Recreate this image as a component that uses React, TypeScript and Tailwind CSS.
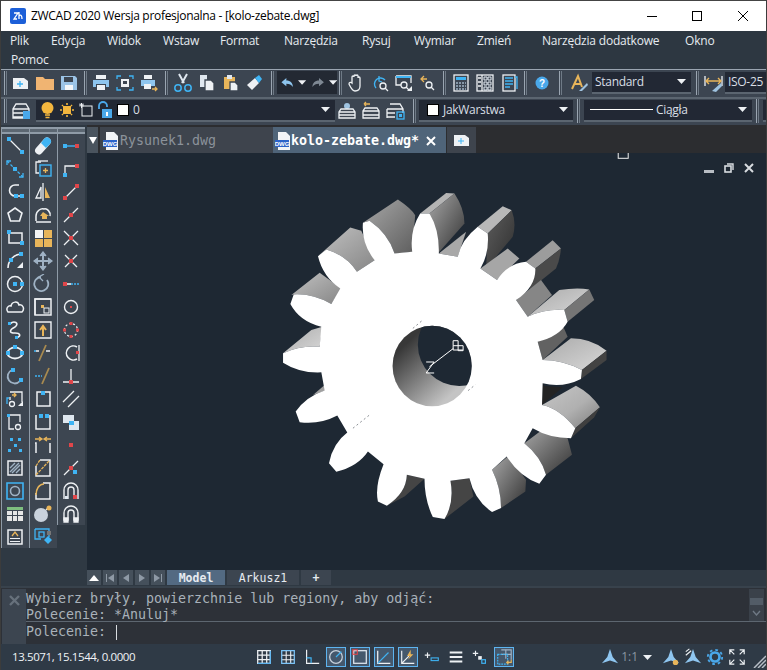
import type { ReactNode } from "react"

const W = "#eef1f4"
const B = "#3fb4f4"
const R = "#e0464a"
const Y = "#e8b55a"
const G = "#9fb2c4"

const Sq = ({ x, y, c = B, s = 4 }: { x: number; y: number; c?: string; s?: number }) => (
  <rect x={x} y={y} width={s} height={s} fill={c} stroke="none" />
)

const Ic = ({ children, size = 20 }: { children: ReactNode; size?: number }) => (
  <svg width={size} height={size} viewBox="0 0 20 20" fill="none" stroke={W} strokeWidth="1.3">
    {children}
  </svg>
)

// left toolbars, top to bottom
const drawIcons: ReactNode[] = [
  <><path d="M4 3 L16 15" /><Sq x={2} y={1} /><Sq x={15} y={14} /></>,
  <><path d="M2 2 L18 18" stroke={B} strokeDasharray="3 2" /><Sq x={8} y={8} /><path d="M2 6 V2 H6 M18 14 V18 H14" stroke={B} /></>,
  <><path d="M14 3 H10 A5 5 0 0 0 10 14 H16" strokeWidth="1.6" /><Sq x={9} y={12} /><Sq x={15} y={12} /></>,
  <path d="M10 3 L17 8 L14.5 16 H5.5 L3 8 Z" strokeWidth="1.6" />,
  <><path d="M4 5 H17 V15 H4 Z" strokeWidth="1.5" /><Sq x={2} y={2} /><Sq x={15} y={13} /></>,
  <><path d="M3 17 A14 14 0 0 1 16 3" strokeWidth="1.6" /><Sq x={14} y={1} /><Sq x={4} y={7} /><path d="M12 17 L18 11 V17 Z" fill={W} stroke="none" /></>,
  <><circle cx="10" cy="10" r="7.5" strokeWidth="1.5" /><Sq x={8} y={8} /><Sq x={15} y={8} /></>,
  <path d="M3 15 C0 11 4 8 6 9 C7 4 13 4 14 8 C18 7 20 12 17 15 Z" strokeWidth="1.5" />,
  <><path d="M5 4 C9 0 15 3 10 7 C4 10 4 13 10 13 C15 13 17 16 11 18" strokeWidth="1.6" /><Sq x={3} y={2} s={3} /><Sq x={10} y={16} s={3} /></>,
  <><ellipse cx="10" cy="10" rx="7.5" ry="5.5" strokeWidth="1.8" /><Sq x={8} y={2} /><Sq x={1} y={8} /><Sq x={15} y={8} /></>,
  <><path d="M15 15 A7 7 0 1 1 7 4" stroke={G} strokeWidth="1.8" /><Sq x={6} y={2} s={4} /><Sq x={14} y={12} /></>,
  <><path d="M5 3 H17 V13 M5 11 V8" /><path d="M4 9 H2 V15" stroke={B} /><circle cx="7" cy="15" r="2.5" /><path d="M7 6 H11 M9 4 L11 6 L9 8" stroke={Y} /><path d="M13 17 L18 12 V17 Z" fill={W} stroke="none" /></>,
  <><path d="M4 3 H15 V10 M4 3 V17 H9" /><circle cx="13" cy="15" r="2.5" /><Sq x={2} y={2} s={3} /></>,
  <><Sq x={5} y={3} s={3} /><Sq x={13} y={3} s={3} /><Sq x={9} y={9} s={3} /><Sq x={3} y={14} s={3} /><Sq x={14} y={14} s={3} /></>,
  <><path d="M3 3 H17 V17 H3 Z" strokeWidth="1.5" /><path d="M5 10 L10 5 M5 14 L14 5 M7 15 L15 7 M11 15 L15 11" stroke={G} strokeWidth="1.4" /></>,
  <><path d="M2 2 H18 V18 H2 Z" stroke={B} strokeWidth="1.6" /><circle cx="10" cy="10" r="4.5" stroke={G} strokeWidth="1.6" /></>,
  <><rect x="2" y="3" width="16" height="3" fill="#7fbf7f" stroke="none" /><path d="M2 7 H7 V11 H2 Z M8 7 H12 V11 H8 Z M13 7 H18 V11 H13 Z M2 12 H7 V17 H2 Z M8 12 H12 V17 H8 Z M13 12 H18 V17 H13 Z" fill="#e6e6e6" stroke="none" /></>,
  <><path d="M3 3 H17 V17 H3 Z" strokeWidth="1.5" /><path d="M7 9 L10 5 L13 9" stroke={Y} /><path d="M5 11.5 H15 M5 14.5 H15" strokeWidth="1" /></>,
]

const editIcons: ReactNode[] = [
  <><path d="M3 12 L11 3 A3 3 0 0 1 17 8 L9 17 A3 3 0 0 1 3 12 Z" fill={W} stroke="none" /><path d="M8 7 L11 3 A3 3 0 0 1 17 8 L13 12 Z" fill={B} stroke="none" /></>,
  <><path d="M8 3 H3 V14 H6" /><path d="M5 2 H15" /><rect x="7" y="6" width="11" height="11" stroke={B} strokeWidth="1.4" /><path d="M12.5 9 V14 M10 11.5 H15" stroke={Y} /></>,
  <><path d="M3 16 L8 5 V16 Z" /><path d="M10 1 V19" /><path d="M12 5 L17 16 H12 Z" fill={Y} stroke="none" /></>,
  <><path d="M3 16 V11 C3 6 8 3 11 4 C14 3 18 7 17 11 M3 17 H18" strokeWidth="1.5" /><path d="M10 7 L7 11 H9 V14 H14 V11 H16 Z" fill={Y} stroke="none" /></>,
  <><Sq x={2} y={2} s={8} c="#f4f4f4" /><Sq x={11} y={2} s={8} c={Y} /><Sq x={2} y={11} s={8} c={Y} /><Sq x={11} y={11} s={8} c={Y} /></>,
  <><path d="M10 2 V18 M2 10 H18" stroke={G} strokeWidth="2" /><path d="M7 5 L10 1 L13 5 M7 15 L10 19 L13 15 M5 7 L1 10 L5 13 M15 7 L19 10 L15 13" fill={G} stroke={G} /></>,
  <><path d="M14 6 A7 7 0 1 1 8 3" stroke={G} strokeWidth="1.8" /><path d="M11 0 L6 3 L10 7" stroke={G} strokeWidth="1.3" /></>,
  <><path d="M2 2 H18 V18 H2 Z" strokeWidth="1.5" /><path d="M2 18 V2 H18" /><Sq x={8} y={8} s={3} c={Y} /><rect x="11" y="11" width="5" height="5" strokeWidth="1" /></>,
  <><path d="M2 2 H18 V18 H2 Z" strokeWidth="1.4" /><path d="M10 16 V7 M7 10 L10 6 L13 10" stroke={Y} strokeWidth="2" /></>,
  <><path d="M3 8 L6 8 M13 8 H17" stroke={W} /><path d="M6 18 L13 2" stroke="#a88a50" strokeWidth="1.8" /><path d="M1 8 H3" stroke={B} /></>,
  <><path d="M2 10 H9" stroke={B} strokeDasharray="2 1" /><path d="M9 18 L16 2" stroke="#a88a50" strokeWidth="1.8" /></>,
  <><path d="M4 3 H17 V17 H4 Z" strokeWidth="1.5" /><Sq x={8} y={2} /></>,
  <><path d="M3 3 V17 H17 V3" strokeWidth="1.5" /><Sq x={6} y={2} /><Sq x={12} y={2} /></>,
  <><path d="M3 18 V8 H2 M17 18 V8" strokeWidth="1.5" /><path d="M2 4 H8 M6 2 L9 4 L6 6 M18 4 H12 M14 2 L11 4 L14 6" stroke={Y} /></>,
  <><path d="M3 8 V18 H17 V2 H7" strokeWidth="1.5" /><path d="M3 8 L7 2 M3 17 L16 3" stroke={Y} strokeDasharray="3 1" /></>,
  <><path d="M3 12 V18 H17 V2 H10" strokeWidth="1.5" /><path d="M3 14 C3 8 6 3 11 3" stroke={Y} strokeWidth="1.5" /></>,
  <><circle cx="8" cy="11" r="7" fill="#c9d2dc" stroke="none" /><path d="M13 6 L15 4" stroke={W} /><circle cx="16" cy="4" r="2.5" fill={Y} stroke="none" /></>,
  <><path d="M2 2 H16 V10 M2 2 V12 H8" stroke={B} /><rect x="6" y="5" width="5" height="5" stroke={B} /><path d="M11 13 L15 9 L19 13 L15 17 Z" fill={B} stroke="none" /><rect x="14" y="4" width="4" height="4" fill="#777" stroke="none" /></>,
]

const snapIcons: ReactNode[] = [
  <><path d="M3 10 H17" stroke={B} strokeWidth="1.4" /><Sq x={2} y={8} /><Sq x={14} y={8} c={R} /></>,
  <><path d="M4 16 V7 H14" /><Sq x={2} y={14} /><Sq x={14} y={5} c={R} /></>,
  <><path d="M4 16 L16 4" /><Sq x={2} y={14} c={R} /><Sq x={14} y={2} c={R} /></>,
  <><path d="M3 17 L17 3" /><Sq x={8} y={8} c={R} /></>,
  <><path d="M3 3 L17 17 M17 3 L3 17" /><Sq x={8} y={8} c={R} /></>,
  <><path d="M4 4 L16 16 M16 4 L4 16" /><Sq x={8} y={8} c={R} /></>,
  <><path d="M3 10 H10" strokeWidth="1.6" /><path d="M10 10 H19" stroke={B} strokeDasharray="2 1" /><Sq x={2} y={8} c={R} /></>,
  <><circle cx="10" cy="10" r="6.5" strokeWidth="1.4" /><Sq x={9} y={9} s={2} c={R} /></>,
  <><circle cx="10" cy="10" r="6.5" stroke={W} strokeWidth="1.2" strokeDasharray="2 2" /><Sq x={8.5} y={2} s={3} c={R} /><Sq x={8.5} y={15} s={3} c={R} /><Sq x={2} y={8.5} s={3} c={R} /><Sq x={15} y={8.5} s={3} c={R} /></>,
  <><path d="M16 4 A7 7 0 1 0 16 16" strokeWidth="1.6" /><path d="M18 2 V18" strokeWidth="1.3" /><Sq x={15} y={8} s={3} c={R} /></>,
  <><path d="M10 3 V16 M2 16 H18" /><Sq x={8} y={14} c={R} /></>,
  <path d="M2 13 L13 2 M7 18 L18 7" />,
  <><path d="M2 3 H13 V9 H18 V18 H8 V11 H2 Z" fill="#dfe7ef" stroke="none" /><path d="M8 9 H13 V13 H8 Z" fill={B} stroke="none" /></>,
  <Sq x={8} y={8} c={R} />,
  <><path d="M3 17 L17 3" /><Sq x={8} y={8} c={R} /><Sq x={12} y={12} /></>,
  <><path d="M3 18 V9 A7 7 0 0 1 17 9 V18 M7 18 V9 A3 3 0 0 1 13 9 V18" strokeWidth="1.4" /><Sq x={4} y={15} s={3} c="#dfe7ef" /><Sq x={12} y={14} c={R} /></>,
  <><path d="M3 16 V9 A7 7 0 0 1 17 9 V16 H13 V9 A3 3 0 0 0 7 9 V16 Z" strokeWidth="1.4" /><path d="M3 14 V18 H7 V14 Z M13 14 V18 H17 V14 Z" fill={W} /></>,
]

const rowOne = {
  file: [
    <><path d="M2 5 H13 L17 8 V16 H2 Z" fill={W} stroke="none" /><path d="M9 8 V14 M6 11 H12" stroke={B} /></>,
    <><path d="M1 4 H8 L10 6 H19 V17 H1 Z" fill="#f0b472" stroke="none" /></>,
    <><path d="M2 3 H16 L18 5 V17 H2 Z" fill="#9bc3e6" stroke="none" /><rect x="5" y="4" width="9" height="5" fill="#3c4551" stroke="none" /><rect x="6" y="12" width="8" height="5" fill="#f4f6f8" stroke="none" /></>,
  ],
  print: [
    <><path d="M5 2 H15 V6 H5 Z" fill={W} stroke="none" /><path d="M2 7 H18 V14 H15 V11 H5 V14 H2 Z" fill="#8ec5ee" stroke="none" /><rect x="6" y="12" width="8" height="5" fill={W} stroke="none" /></>,
    <><path d="M2 6 V3 H6 M14 3 H18 V6 M18 14 V17 H14 M6 17 H2 V14" stroke={B} /><rect x="6" y="6" width="8" height="8" fill={W} stroke="none" /><rect x="8" y="8" width="4" height="3" fill="#3c4551" stroke="none" /></>,
    <><path d="M5 2 H13 V6 H5 Z" fill={W} stroke="none" /><path d="M2 7 H16 V13 H2 Z" fill="#8ec5ee" stroke="none" /><rect x="5" y="11" width="7" height="5" fill={W} stroke="none" /><path d="M13 16 H18 M16 14 L18 16 L16 18" stroke={Y} /></>,
  ],
  edit: [
    <><path d="M6 1 L11 10 M14 1 L9 10" strokeWidth="2" stroke="#dfe7ef" /><circle cx="5" cy="15" r="3.2" stroke={B} strokeWidth="1.5" /><circle cx="15" cy="15" r="3.2" stroke={B} strokeWidth="1.5" /></>,
    <><path d="M3 2 H10 V14 H3 Z" fill="#dfe7ef" stroke="none" /><path d="M8 7 H14 L17 10 V18 H8 Z" fill={W} stroke="#3c4551" /></>,
    <><path d="M3 4 H14 V16 H3 Z" fill={Y} stroke="none" /><rect x="6" y="2" width="5" height="4" fill="#dfe7ef" stroke="none" /><path d="M9 9 H14 L17 12 V18 H9 Z" fill={W} stroke="#3c4551" /></>,
    <><path d="M2 12 L10 5 L14 10 L7 17 Z" fill={W} stroke="none" /><path d="M10 5 L14 2 L17 6 L14 10 Z" fill={B} stroke="none" /></>,
  ],
  view: [
    <path d="M6 10 V4 A1 1 0 0 1 8 4 V3 A1 1 0 0 1 10 3 V3 A1 1 0 0 1 12 3 V5 A1 1 0 0 1 14 5 V13 C14 16 12 18 9 18 C6 18 5 15 3 11 C3 9 5 9 6 10 Z" />,
    <><path d="M6 15 A6 6 0 1 1 15 7" stroke={B} strokeWidth="1.4" /><path d="M9 3 V8 L12 9" stroke={B} /><circle cx="13" cy="13" r="3" /><path d="M15 15 L18 18" /></>,
    <><path d="M2 3 H17 V10 M2 3 V12 H7" stroke={W} /><path d="M2 3 H17 V5 H2 Z" fill={B} stroke="none" /><circle cx="10" cy="12" r="3" /><path d="M12 14 L15 17" /><path d="M13 18 L18 13 V18 Z" fill={W} stroke="none" /></>,
    <><path d="M6 3 L3 6 L6 9 M3 6 H9" stroke={Y} /><circle cx="11" cy="12" r="3" /><path d="M13 14 L16 17" /></>,
  ],
  calc: [
    <><rect x="3" y="2" width="14" height="16" /><rect x="5" y="4" width="10" height="3" fill={B} stroke="none" /><path d="M5 10 H15 M5 13 H15 M5 16 H15" stroke={G} strokeDasharray="2 1" /></>,
    <><rect x="2" y="2" width="16" height="16" /><path d="M7 2 V18" /><path d="M3 5 H6 M3 9 H6 M3 13 H6" /><path d="M9 4 H12 V7 H9 Z M13 4 H16 V7 H13 Z M9 9 H12 V12 H9 Z M13 9 H16 V12 H13 Z M9 14 H12 V17 H9 Z M13 14 H16 V17 H13 Z" stroke="#dfe7ef" strokeWidth="1" /></>,
    <><rect x="4" y="2" width="12" height="16" /><path d="M6 5 H14 M6 8 H14 M6 11 H14 M6 14 H11" stroke={B} strokeWidth="1.5" /><path d="M16 4 H18 V16" stroke={B} /></>,
  ],
}

const Bars = ({ className }: { className: string }) => (
  <div className={`flex h-[24px] shrink-0 items-center justify-center gap-[1px] ${className}`}>
    <div className="h-full w-[1px] bg-[#9aa5b1]" />
    <div className="h-full w-[1px] bg-[#6f7a86]" />
  </div>
)

const Tool = ({ children, className = "w-[24px]" }: { children: ReactNode; className?: string }) => (
  <div className={`flex h-[24px] shrink-0 items-center justify-center ${className}`}>{children}</div>
)

const Caret = ({ className = "" }: { className?: string }) => (
  <svg width="9" height="5" viewBox="0 0 9 5" className={className}>
    <path d="M0 0 H9 L4.5 5 Z" fill={W} />
  </svg>
)

const Combo = ({ className, children }: { className: string; children: ReactNode }) => (
  <div className={`flex h-[22px] shrink-0 items-center border-b-2 border-[#5b6570] bg-[#222834] text-[12px] tracking-[-0.3px] text-[#d9dfe5] ${className}`}>
    {children}
  </div>
)

const menu = [
  { label: "Plik", cls: "w-[41px]" },
  { label: "Edycja", cls: "w-[56px]" },
  { label: "Widok", cls: "w-[56px]" },
  { label: "Wstaw", cls: "w-[57px]" },
  { label: "Format", cls: "w-[64px]" },
  { label: "Narzędzia", cls: "w-[78px]" },
  { label: "Rysuj", cls: "w-[52px]" },
  { label: "Wymiar", cls: "w-[63px]" },
  { label: "Zmień", cls: "w-[65px]" },
  { label: "Narzędzia dodatkowe", cls: "w-[143px]" },
  { label: "Okno", cls: "w-[50px]" },
]

const statusLeft: { icon: ReactNode; on?: boolean }[] = [
  { icon: <><path d="M3 3 H17 V17 H3 Z M3 8 H17 M3 13 H17 M8 3 V17 M13 3 V17" strokeWidth="1.4" /><path d="M17 3 V17 H3" stroke="#5db4f0" strokeWidth="1.4" /></> },
  { icon: <><path d="M3 8 H17 M3 13 H17 M8 3 V17 M13 3 V17" strokeWidth="1.2" /><path d="M3 3 H17 V17 H3 Z" stroke="#7cc4f7" strokeWidth="1.4" /></> },
  { icon: <><path d="M4 2 V17 H18" /><path d="M4 11 H9 V17" stroke={B} /></> },
  { on: true, icon: <><circle cx="10" cy="10" r="7" stroke="#c8d2dc" strokeWidth="1.4" /><path d="M10 10 L16 4" stroke={B} /></> },
  { on: true, icon: <><rect x="3" y="3" width="14" height="14" stroke="#dfe7ef" strokeWidth="1.4" /><rect x="2" y="2" width="5" height="5" stroke={R} strokeWidth="1.2" /></> },
  { on: true, icon: <><path d="M3 3 V17 H17" strokeWidth="1.4" /><path d="M3 17 L15 5" stroke={B} /></> },
  { on: true, icon: <><path d="M3 3 V17 H17 M3 17 L11 9" strokeWidth="1.3" /><path d="M13 2 L9 9 H12 L10 13 L16 7 H13 Z" fill={Y} stroke="none" /></> },
  { icon: <><path d="M2 8 H8 M5 5 V11" /><rect x="9" y="11" width="8" height="3" stroke={B} strokeWidth="1.2" /></> },
  { icon: <path d="M3 5 H17 M3 10 H17 M3 15 H17" strokeWidth="2.4" /> },
  { icon: <><path d="M2 6 H8 M5 3 V9" /><rect x="8" y="9" width="4" height="4" fill={W} stroke="none" /><rect x="12" y="13" width="4" height="4" stroke={B} /></> },
  { on: true, icon: <><path d="M7 2 H18 V13" stroke="#9fb2c4" /><path d="M12 2 V12 M7 7 H18" stroke="#9fb2c4" /><rect x="3" y="7" width="11" height="11" stroke={B} strokeDasharray="2 1" /><path d="M18 13 V16 H13 M15 14 L13 16 L15 18" stroke={Y} /></> },
]

const AnnoMark = () => <path d="M10 1 L13 10 L19 17 L10 14 L1 17 L7 10 Z" fill="#8fc6f0" stroke="none" />

const GEAR_FRONT =
  "M428 215 Q420 150 452 100 L480 100 Q510 150 508 220 L565 230 Q575 180 625 140 L655 160 Q660 220 633 265 L683 300 Q715 250 770 245 L798 265 Q800 320 740 360 L775 410 Q830 385 885 390 L895 425 Q870 470 805 485 L820 540 Q880 540 938 570 L935 597 Q880 625 820 610 L818 675 Q870 685 918 745 L905 775 Q840 775 790 745 L765 790 Q815 830 830 885 L810 912 Q750 890 712 830 L668 870 Q695 925 695 985 L668 997 Q615 960 600 895 L543 903 Q555 970 525 1018 L490 1012 Q465 960 465 897 L412 885 Q410 940 352 978 L325 965 Q315 920 342 853 L295 815 Q265 860 200 876 L178 850 Q190 790 233 758 L203 707 Q150 735 90 727 L78 695 Q110 650 165 632 L155 577 Q90 580 40 548 L40 520 Q90 495 150 500 L155 440 Q90 425 62 372 L72 343 Q130 340 185 372 L212 325 Q160 290 145 228 L170 208 Q230 225 262 275 L315 240 Q275 190 280 128 L300 122 Q355 160 375 220 Z"

const gearBack: { d: string; fill: string }[] = [
  { d: "M375 220 L428 215 L430 185 L405 190 Z", fill: "#a8a8a8" },
  { d: "M452 100 L530 38 L555 40 L480 100 Z", fill: "#b4b4b4" },
  { d: "M480 100 L555 40 Q585 85 585 130 L505 220 Z", fill: "url(#gMidDark)" },
  { d: "M280 128 L385 58 Q425 85 437 105 L428 215 L375 220 Q355 160 300 122 Z", fill: "url(#gMid)" },
  { d: "M145 228 L242 142 L275 152 L315 240 L262 275 Q230 225 170 208 Z", fill: "url(#gLight)" },
  { d: "M65 345 L150 278 L215 325 L185 372 Q130 340 72 343 Z", fill: "url(#gLight)" },
  { d: "M40 520 L125 450 L158 440 L150 500 Q90 495 40 520 Z", fill: "url(#gPale)" },
  { d: "M130 645 L165 615 L168 632 Z", fill: "#a0a0a0" },
  { d: "M508 220 L590 155 L565 230 Z", fill: "#a8a8a8" },
  { d: "M625 140 L700 78 L727 90 L655 160 Z", fill: "#b8b8b8" },
  { d: "M655 160 L727 90 Q742 130 730 170 L650 265 Z", fill: "url(#gDark)" },
  { d: "M633 265 L715 205 L750 235 L683 300 Z", fill: "#a6a6a6" },
  { d: "M770 245 L850 180 L875 205 L798 265 Z", fill: "#9c9c9c" },
  { d: "M798 265 L875 205 Q872 240 860 265 L780 330 Z", fill: "#4a4a4a" },
  { d: "M740 360 L815 300 L848 345 L775 410 Z", fill: "#868686" },
  { d: "M775 410 L870 330 Q920 322 960 328 L885 390 Q830 385 775 410 Z", fill: "url(#gPale)" },
  { d: "M885 390 L960 328 L975 360 L895 425 Z", fill: "#757575" },
  { d: "M805 485 L880 435 L895 470 L820 540 Z", fill: "#626262" },
  { d: "M820 540 L905 475 Q965 475 1012 512 L938 570 Q880 540 820 540 Z", fill: "url(#gPale)" },
  { d: "M938 570 L1012 512 L1012 540 L935 597 Z", fill: "#434343" },
  { d: "M820 610 L825 618 L880 622 L818 675 Z", fill: "#242424" },
  { d: "M818 675 L920 617 Q965 640 992 682 L918 745 Q870 685 818 675 Z", fill: "url(#gLightMid)" },
  { d: "M905 775 L918 745 L992 682 L975 712 Z", fill: "#3f3f3f" },
  { d: "M765 790 L825 745 L895 775 L908 825 L830 885 Q815 830 765 790 Z", fill: "url(#gMidDark)" },
  { d: "M668 870 L718 828 L770 900 L768 935 L695 985 Q695 925 668 870 Z", fill: "url(#gMidDark)" },
  { d: "M543 903 L600 895 L612 950 L525 1018 Q555 970 543 903 Z", fill: "#454545" },
  { d: "M412 885 L465 897 L405 950 L352 978 Q410 940 412 885 Z", fill: "#454545" },
]

const Canvas = () => (
  <svg viewBox="0 0 680 417" className="h-[417px] w-full" fill="none">
    <defs>
      <linearGradient id="gPale" x1="0" y1="0" x2="1" y2="1">
        <stop offset="0" stopColor="#aaaaaa" /><stop offset="1" stopColor="#d8d8d8" />
      </linearGradient>
      <linearGradient id="gLight" x1="0" y1="0" x2="1" y2="1">
        <stop offset="0" stopColor="#c2c2c2" /><stop offset="1" stopColor="#868686" />
      </linearGradient>
      <linearGradient id="gLightMid" x1="0" y1="0" x2="1" y2="1">
        <stop offset="0" stopColor="#c6c6c6" /><stop offset="0.55" stopColor="#b0b0b0" /><stop offset="1" stopColor="#7c7c7c" />
      </linearGradient>
      <linearGradient id="gMid" x1="0" y1="0" x2="1" y2="1">
        <stop offset="0" stopColor="#a8a8a8" /><stop offset="1" stopColor="#5e5e5e" />
      </linearGradient>
      <linearGradient id="gMidDark" x1="0" y1="0" x2="1" y2="1">
        <stop offset="0" stopColor="#a6a6a6" /><stop offset="1" stopColor="#333333" />
      </linearGradient>
      <linearGradient id="gDark" x1="0" y1="0" x2="1" y2="1">
        <stop offset="0" stopColor="#5e5e5e" /><stop offset="1" stopColor="#2e2e2e" />
      </linearGradient>
      <linearGradient id="gBore" gradientUnits="userSpaceOnUse" x1="400" y1="500" x2="540" y2="650">
        <stop offset="0" stopColor="#383838" /><stop offset="1" stopColor="#c4c4c4" />
      </linearGradient>
      <clipPath id="bore"><ellipse cx="488" cy="558" rx="119" ry="121" /></clipPath>
    </defs>

    <rect x="532" y="-6" width="10" height="11" stroke="#f0f0f0" />

    <g transform="translate(183 27) scale(0.33333)">
      {gearBack.map((p, i) => <path key={i} d={p.d} fill={p.fill} />)}
      <path d={GEAR_FRONT} fill="#ffffff" />
      <ellipse cx="488" cy="558" rx="119" ry="121" fill="url(#gBore)" />
      <g clipPath="url(#bore)">
        <circle cx="569" cy="494" r="124" fill="#1e2833" />
      </g>
      {/* UCS icon */}
      <g stroke="#ffffff" strokeWidth="3" fill="none">
        <path d="M470 546 H494 L470 579 H494" />
        <path d="M480 560 L552 505" />
        <path d="M551 482 H566 V512 H581 V497 H551 V482 M551 497 V510 H581" />
      </g>
      <path d="M430 445 L462 418 M596 632 L618 614 M250 745 L300 705" stroke="#8b8f94" strokeWidth="3" strokeDasharray="6 8" />
    </g>
  </svg>
)

const ToolColumn = ({ items }: { items: ReactNode[] }) => (
  <div className="w-[28px] shrink-0 self-start border-l border-[#8f9ba7] bg-[#3d4651]">
    <div className="h-[7px] border-y-2 border-[#8f9ba7] bg-[#5c6772]" />
    {items.map((ic, i) => (
      <div key={i} className="flex h-[23px] items-center justify-center pr-[2px]">
        <Ic>{ic}</Ic>
      </div>
    ))}
  </div>
)

const NavBtn = ({ children }: { children: ReactNode }) => (
  <div className="flex h-[15px] w-[14px] items-center justify-center bg-[#45505b]">
    <svg width="10" height="10" viewBox="0 0 10 10" fill="#8e99a5">{children}</svg>
  </div>
)

export default function App() {
  return (
    <div className="flex h-[670px] w-[767px] flex-col overflow-hidden border-x border-[#3c3c3c] bg-[#2f3943] font-['Open_Sans',sans-serif]">
      {/* title bar */}
      <div className="flex h-[31px] shrink-0 items-center border-t border-[#444] bg-white pl-[9px] text-[12px] text-black">
        <svg width="16" height="16" viewBox="0 0 16 16">
          <rect width="16" height="16" rx="2" fill="#1c5fd8" />
          <path d="M4 5 H8 L4 11 H7 M9 4 V11 M9 8 C11 6 12 8 12 11" stroke="#fff" strokeWidth="1.3" fill="none" />
        </svg>
        <span className="ml-[5px] tracking-[-0.3px]">ZWCAD 2020 Wersja profesjonalna - [kolo-zebate.dwg]</span>
        <div className="ml-auto flex items-center">
          <div className="mr-[35px] h-[1px] w-[10px] bg-black" />
          <div className="mr-[36px] h-[10px] w-[10px] border border-black" />
          <svg width="10" height="10" viewBox="0 0 10 10" className="mr-[18px]">
            <path d="M0 0 L10 10 M10 0 L0 10" stroke="#000" />
          </svg>
        </div>
      </div>

      {/* menu */}
      <div className="h-[38px] shrink-0 bg-[#2d3741] pl-[9px] text-[12px] leading-[19px] tracking-[-0.2px] text-[#e6ebf0]">
        <div className="flex">
          {menu.map((m) => (
            <span key={m.label} className={`shrink-0 ${m.cls}`}>{m.label}</span>
          ))}
        </div>
        <div className="pl-[1px]">Pomoc</div>
      </div>

      {/* standard toolbar */}
      <div className="flex h-[28px] shrink-0 items-center border-t border-[#9aa5b1] bg-[#3c4551] pb-[2px] pl-[1px]">
        <Bars className="w-[7px]" />
        {rowOne.file.map((ic, i) => <Tool key={i}><Ic>{ic}</Ic></Tool>)}
        <Bars className="w-[8px]" />
        {rowOne.print.map((ic, i) => <Tool key={i}><Ic>{ic}</Ic></Tool>)}
        <Bars className="w-[10px]" />
        {rowOne.edit.map((ic, i) => <Tool key={i}><Ic>{ic}</Ic></Tool>)}
        <Bars className="w-[10px]" />
        <div className="flex h-[23px] w-[60px] shrink-0 items-center gap-[3px] bg-[#232933] pl-[2px]">
          <Ic size={18}><path d="M9 4 L3 9 L9 14 V11 C13 11 15 12 17 15 C17 10 14 7 9 7 Z" fill="#8ec5ee" stroke="none" /></Ic>
          <Caret />
          <Ic size={18}><path d="M11 4 L17 9 L11 14 V11 C7 11 5 12 3 15 C3 10 6 7 11 7 Z" fill="#7f8994" stroke="none" /></Ic>
          <Caret />
        </div>
        <Bars className="w-[7px]" />
        {rowOne.view.map((ic, i) => <Tool key={i}><Ic>{ic}</Ic></Tool>)}
        <Bars className="w-[9px]" />
        {rowOne.calc.map((ic, i) => <Tool key={i}><Ic>{ic}</Ic></Tool>)}
        <Bars className="w-[9px]" />
        <Tool>
          <svg width="14" height="14" viewBox="0 0 14 14">
            <circle cx="7" cy="7" r="6.5" fill="#4aa8ea" />
            <text x="7" y="10.5" textAnchor="middle" fontSize="10" fontWeight="700" fill="#fff" fontFamily="Liberation Sans">?</text>
          </svg>
        </Tool>
        <Bars className="w-[13px]" />
        <Tool>
          <Ic>
            <path d="M3 16 L9 3 L13 14 M5 11 H12" stroke={Y} strokeWidth="2" />
            <path d="M10 18 L18 10 L19 12 L13 18 Z" fill="#9fc3e0" stroke="none" />
          </Ic>
        </Tool>
        <Combo className="ml-[1px] w-[99px] justify-between pl-[3px] pr-[5px]">
          <span>Standard</span><Caret />
        </Combo>
        <Bars className="w-[12px]" />
        <Tool className="w-[22px]">
          <Ic>
            <path d="M1 3 V13 M18 3 V13" stroke={W} />
            <path d="M2 8 H17 M5 5 L2 8 L5 11 M14 5 L17 8 L14 11" stroke={Y} strokeWidth="1.4" />
            <path d="M8 18 L17 10 L18 13 L12 19 Z" fill="#9fc3e0" stroke="none" />
          </Ic>
        </Tool>
        <Combo className="w-[42px] pl-[3px]">
          <span>ISO-25</span>
        </Combo>
      </div>

      {/* layer toolbar */}
      <div className="flex h-[28px] shrink-0 items-center border-t-2 border-[#5b6570] bg-[#3c4551] pb-[3px] pl-[1px]">
        <Bars className="w-[7px]" />
        <Tool>
          <Ic>
            <path d="M5 3 H15 L18 8 V17 H2 V8 Z M2 8 H18 M2 12 H12 M2 16 H12" />
            <rect x="12" y="10" width="7" height="8" fill="#4aa8ea" stroke="none" />
          </Ic>
        </Tool>
        <Combo className="ml-[3px] w-[299px] pl-[4px] pr-[5px]">
          <svg width="15" height="20" viewBox="0 0 15 20">
            <circle cx="7.5" cy="8" r="6" fill="#f3b63e" />
            <path d="M5 15 H10 M5.5 17.5 H9.5" stroke="#f3b63e" strokeWidth="1.5" />
          </svg>
          <svg width="16" height="16" viewBox="0 0 16 16" className="ml-[4px]">
            <rect x="4" y="4" width="8" height="8" fill="#f3b63e" />
            <path d="M8 1 V3 M8 13 V15 M1 8 H3 M13 8 H15 M3 3 L4 4 M12 12 L13 13 M13 3 L12 4 M3 13 L4 12" stroke="#f3b63e" strokeWidth="1.6" />
          </svg>
          <svg width="16" height="16" viewBox="0 0 16 16" className="ml-[3px]" fill="none">
            <rect x="4" y="4" width="10" height="10" stroke="#eef1f4" />
            <path d="M1 3 H6 M3.5 1 V6 M2 1.5 L5 4.5 M5 1.5 L2 4.5" stroke="#eef1f4" />
          </svg>
          <svg width="16" height="18" viewBox="0 0 16 18" className="ml-[3px]" fill="none">
            <path d="M2 8 V5 A4 4 0 0 1 10 5 V6" stroke="#4aa8ea" strokeWidth="1.8" />
            <rect x="5" y="8" width="10" height="9" fill="#4aa8ea" />
            <rect x="9" y="11" width="2" height="4" fill="#fff" />
          </svg>
          <div className="ml-[4px] h-[12px] w-[12px] border border-black bg-white" />
          <span className="ml-[4px]">0</span>
          <Caret className="ml-auto" />
        </Combo>
        <Tool>
          <Ic>
            <circle cx="10" cy="5" r="3" fill="#9fc3e0" stroke="none" />
            <path d="M4 8 H16 L18 11 V17 H2 V11 Z M2 11 H18 M2 14 H18" />
          </Ic>
        </Tool>
        <Tool>
          <Ic>
            <path d="M5 5 L3 3 M3 3 L5 1 M3 3 H9" stroke={Y} />
            <path d="M4 7 H16 L18 10 V17 H2 V10 Z M2 10 H18 M2 14 H18" />
          </Ic>
        </Tool>
        <Tool>
          <Ic>
            <path d="M5 3 H15 L18 8 V12 M2 8 H18 M2 12 H10 M2 16 H10 M2 8 V17" />
            <rect x="12" y="11" width="7" height="7" fill="none" stroke={B} />
            <rect x="14" y="13" width="3" height="3" fill={B} stroke="none" />
          </Ic>
        </Tool>
        <Bars className="ml-[3px] w-[9px]" />
        <Combo className="w-[154px] pl-[8px] pr-[5px]">
          <div className="h-[12px] w-[12px] border border-black bg-white" />
          <span className="ml-[4px]">JakWarstwa</span>
          <Caret className="ml-auto" />
        </Combo>
        <Bars className="w-[11px]" />
        <Combo className="w-[168px] pl-[6px] pr-[5px]">
          <div className="h-[1px] w-[63px] bg-white" />
          <span className="ml-[3px]">Ciągła</span>
          <Caret className="ml-auto" />
        </Combo>
        <Bars className="w-[11px]" />
        <Combo className="w-[6px]"><span /></Combo>
      </div>

      <div className="flex min-h-0 flex-1">
        {/* left docked toolbars */}
        <div className="flex w-[86px] shrink-0 bg-[#2f3943] pt-[2px]">
          <ToolColumn items={drawIcons} />
          <ToolColumn items={editIcons} />
          <ToolColumn items={snapIcons} />
        </div>

        <div className="flex min-w-0 flex-1 flex-col">
          {/* document tabs */}
          <div className="flex h-[28px] shrink-0 items-end bg-[#2c2d30] font-['DejaVu_Sans_Mono',monospace] text-[13.3px]">
            <div className="flex h-[26px] w-[11px] items-center justify-center bg-[#4a545e]">
              <svg width="8" height="7" viewBox="0 0 8 7"><path d="M0 0 H8 L4 7 Z" fill="#fff" /></svg>
            </div>
            <div className="ml-[2px] flex h-[26px] w-[173px] items-center bg-[#3e444d] pl-[3px] pt-[1px] text-[#8b929a]">
              <DwgIcon />
              <span className="ml-[1px]">Rysunek1.dwg</span>
            </div>
            <div className="flex h-[26px] w-[173px] items-center bg-[#4f6479] pl-[2px] pt-[1px] font-bold text-white">
              <DwgIcon />
              <span>kolo-zebate.dwg*</span>
              <svg width="10" height="10" viewBox="0 0 10 10" className="ml-auto mr-[10px]">
                <path d="M1 1 L9 9 M9 1 L1 9" stroke="#fff" strokeWidth="2" />
              </svg>
            </div>
            <div className="ml-[1px] flex h-[26px] w-[29px] items-center justify-center bg-[#3e444d]">
              <svg width="15" height="11" viewBox="0 0 15 11">
                <path d="M0 0 H11 L15 3 V11 H0 Z" fill="#eef1f4" />
                <path d="M7 3 V9 M4 6 H10" stroke={B} />
              </svg>
            </div>
          </div>

          {/* drawing area */}
          <div className="relative shrink-0 bg-[#1e2833]">
            <Canvas />
            <div className="absolute right-[12px] top-[10px] flex items-center gap-[10px]">
              <div className="mt-[6px] h-[3px] w-[10px] bg-[#b9bec4]" />
              <svg width="10" height="10" viewBox="0 0 10 10" fill="none">
                <rect x="1" y="3" width="6" height="6" stroke="#d8dce0" strokeWidth="1.6" />
                <path d="M3 1 H9 V7" stroke="#d8dce0" strokeWidth="1.4" />
              </svg>
              <svg width="10" height="10" viewBox="0 0 10 10">
                <path d="M1 1 L9 9 M9 1 L1 9" stroke="#d8dce0" strokeWidth="2" />
              </svg>
            </div>
          </div>

          {/* layout tabs */}
          <div className="flex h-[16px] shrink-0 items-start gap-[2px] font-['DejaVu_Sans_Mono',monospace] text-[11.5px] leading-[15px] text-[#e6ebf0]">
            <div className="flex h-[15px] w-[14px] items-center justify-center bg-[#45505b]">
              <svg width="10" height="6" viewBox="0 0 10 6"><path d="M0 6 H10 L5 0 Z" fill="#fff" /></svg>
            </div>
            <NavBtn><path d="M1 1 H2 V9 H1 Z M9 1 V9 L3 5 Z" /></NavBtn>
            <NavBtn><path d="M8 1 V9 L2 5 Z" /></NavBtn>
            <NavBtn><path d="M2 1 V9 L8 5 Z" /></NavBtn>
            <NavBtn><path d="M8 1 H9 V9 H8 Z M1 1 V9 L7 5 Z" /></NavBtn>
            <div className="flex h-[15px] w-[58px] items-center justify-center bg-[#536a82] pt-[1px] font-bold">Model</div>
            <div className="flex h-[15px] w-[72px] items-center justify-center bg-[#3c4550] pt-[1px]">Arkusz1</div>
            <div className="flex h-[15px] w-[30px] items-center justify-center bg-[#3c4550] pt-[1px] font-bold">+</div>
          </div>
        </div>
      </div>

      {/* command line */}
      <div className="flex h-[58px] shrink-0 border-t-2 border-[#38424c] bg-[#2d3138] pt-[1px] font-['DejaVu_Sans_Mono',monospace] text-[13.3px] leading-[16px] text-[#a9b1ba]">
        <div className="ml-[1px] flex h-[55px] w-[24px] shrink-0 justify-center bg-[#3c4550] pt-[6px]">
          <svg width="11" height="11" viewBox="0 0 11 11">
            <path d="M1 1 L10 10 M10 1 L1 10" stroke="#67717c" strokeWidth="2.4" />
          </svg>
        </div>
        <div className="flex min-w-0 flex-1 flex-col">
          <div className="flex h-[33px] border-b border-[#5d6670]">
            <div className="flex-1 pt-[2px]">
              <div>Wybierz bryły, powierzchnie lub regiony, aby odjąć:</div>
              <div>Polecenie: *Anuluj*</div>
            </div>
            <div className="flex w-[15px] flex-col items-center bg-[#3a414a]">
              <div className="mt-[9px] h-[7px] w-[13px] bg-[#525c67]" />
              <svg width="9" height="6" viewBox="0 0 9 6" className="mt-[5px]" fill="none">
                <path d="M1 1 L4.5 5 L8 1" stroke="#6f7985" strokeWidth="1.4" />
              </svg>
            </div>
            <div className="w-[2px]" />
          </div>
          <div className="flex items-center pt-[2px]">
            <span className="whitespace-pre">Polecenie: </span>
            <div className="ml-[2px] h-[15px] w-[1px] bg-[#d8dce0]" />
          </div>
        </div>
      </div>

      {/* status bar */}
      <div className="flex h-[26px] shrink-0 items-center bg-[#2f3a46] text-[12px] text-[#f0f3f6]">
        <span className="w-[251px] shrink-0 pl-[11px] text-[11.5px] tracking-[-0.4px]">13.5071, 15.1544, 0.0000</span>
        {statusLeft.map((s, i) => (
          <div key={i} className="flex w-[24px] shrink-0 items-center justify-center">
            <div className={`flex h-[20px] w-[20px] items-center justify-center ${s.on ? "border border-[#5db4f0] bg-[#45586c]" : ""}`}>
              <Ic size={18}>{s.icon}</Ic>
            </div>
          </div>
        ))}
        <div className="ml-auto flex items-center">
          <Ic size={18}><AnnoMark /></Ic>
          <span className="ml-[2px] text-[#8a96a2]">1:1</span>
          <Caret className="ml-[5px] mr-[10px]" />
          <Ic size={18}><AnnoMark /><circle cx="15" cy="16" r="3" fill={Y} stroke="none" /></Ic>
          <span className="w-[4px]" />
          <Ic size={18}><AnnoMark /><path d="M2 4 L6 1 M2 8 L8 3" stroke={W} /></Ic>
          <span className="w-[4px]" />
          <Ic size={18}>
            <circle cx="10" cy="10" r="5" stroke="#4aa8ea" strokeWidth="3" />
            <circle cx="10" cy="10" r="8" stroke="#4aa8ea" strokeWidth="2" strokeDasharray="3 3.3" />
          </Ic>
          <span className="w-[4px]" />
          <Ic size={18}>
            <path d="M2 7 V2 H7 M13 2 H18 V7 M18 13 V18 H13 M7 18 H2 V13 M2 2 L7 7 M18 2 L13 7 M18 18 L13 13 M2 18 L7 13" />
          </Ic>
          <svg width="13" height="13" viewBox="0 0 13 13" className="ml-[7px] mt-[8px]">
            <path d="M13 1 L1 13 M13 5 L5 13 M13 9 L9 13" stroke="#b7bec6" strokeWidth="1.5" />
          </svg>
        </div>
      </div>
    </div>
  )
}

function DwgIcon() {
  return (
    <svg width="16" height="18" viewBox="0 0 16 18" className="shrink-0">
      <path d="M3 0 H11 L15 4 V18 H3 Z" fill="#f2f4f6" />
      <rect x="0" y="8" width="14" height="7" fill="#2a63c9" />
      <text x="7" y="14" textAnchor="middle" fontSize="6" fontWeight="700" fill="#fff" fontFamily="Liberation Sans">DWG</text>
    </svg>
  )
}
